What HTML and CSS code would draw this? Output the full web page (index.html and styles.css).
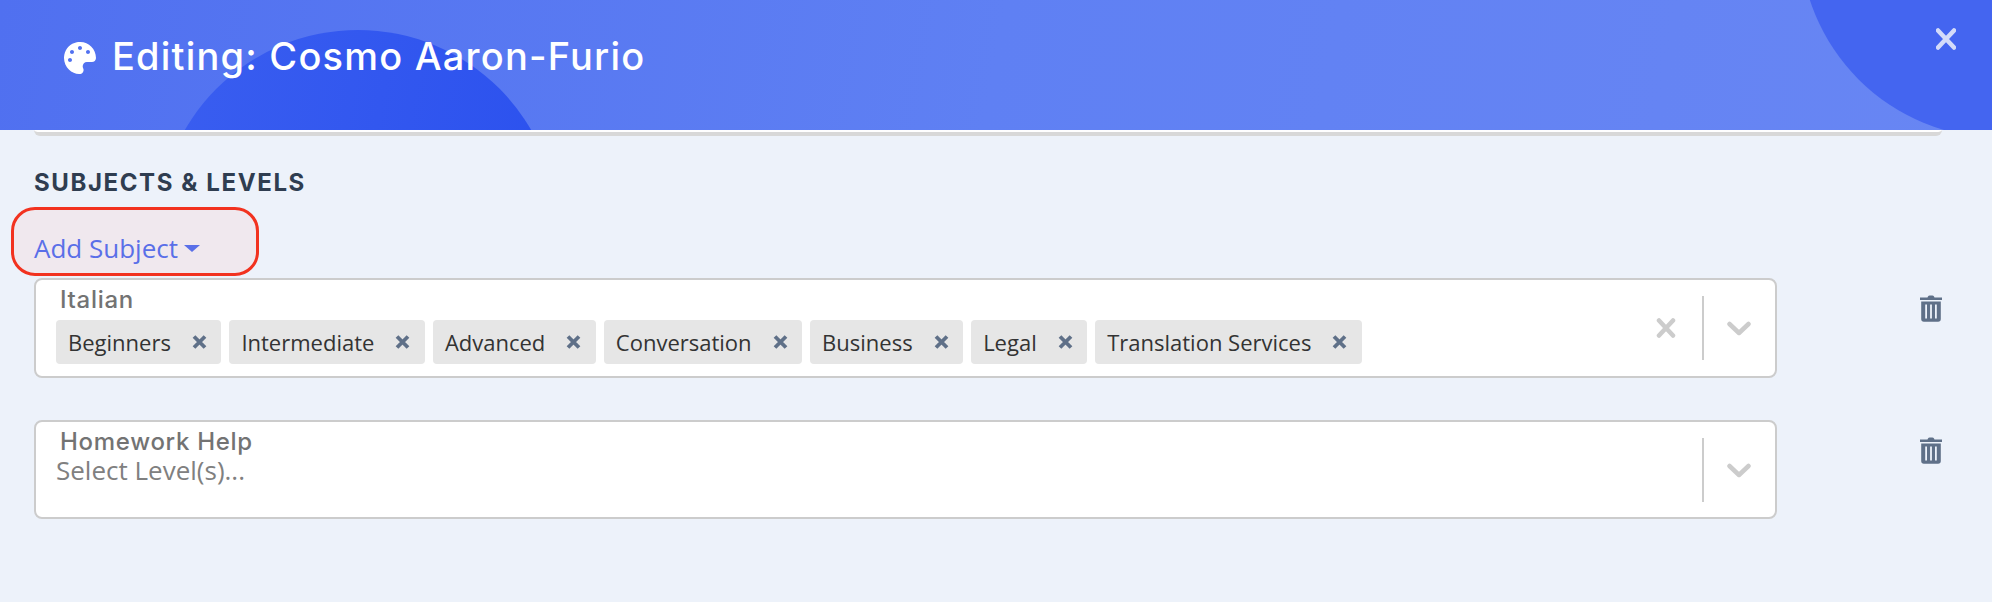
FILE: index.html
```html
<!DOCTYPE html>
<html lang="en">
<head>
<meta charset="utf-8">
<title>Editing: Cosmo Aaron-Furio</title>
<link rel="stylesheet" href="styles.css">
</head>
<body>
<div class="modal">
  <header class="modal-header">
    <span class="blob blob-left"></span>
    <span class="blob blob-right"></span>
    <svg class="palette" viewBox="0 0 512 512" aria-hidden="true"><path fill="#fff" d="M204.3 5C104.9 24.4 24.8 104.3 5.2 203.4c-37 187 131.7 326.4 258.8 306.7 41.2-6.4 61.4-54.6 42.5-91.7-23.1-45.4 9.9-98.4 60.9-98.4h79.7c35.8 0 64.8-29.6 64.9-65.3C511.5 97.1 368.1-26.9 204.3 5zM96 320c-17.7 0-32-14.3-32-32s14.3-32 32-32 32 14.3 32 32-14.3 32-32 32zm32-128c-17.7 0-32-14.3-32-32s14.3-32 32-32 32 14.3 32 32-14.3 32-32 32zm128-64c-17.7 0-32-14.3-32-32s14.3-32 32-32 32 14.3 32 32-14.3 32-32 32zm128 64c-17.7 0-32-14.3-32-32s14.3-32 32-32 32 14.3 32 32-14.3 32-32 32z"/></svg>
    <h1 class="modal-title">Editing: Cosmo Aaron-Furio</h1>
    <svg class="close" viewBox="0 0 20 22" aria-hidden="true"><path d="M2 2.5 18 19.5M18 2.5 2 19.5"/></svg>
  </header>
  <main class="modal-body">
    <div class="prev-field"></div>
    <h2 class="section-title">SUBJECTS &amp; LEVELS</h2>
    <div class="add-subject">
      <span class="highlight"></span>
      <span class="add-label">Add Subject</span>
      <span class="caret"></span>
    </div>
    <div class="subject-row">
      <div class="select">
        <div class="select-values">
          <div class="select-label">Italian</div>
          <div class="chips">
            <span class="chip">Beginners<svg class="chip-x" viewBox="0 0 15 14"><path d="M2 1.500 13 12.500M13 1.500 2 12.500"/></svg></span>
            <span class="chip">Intermediate<svg class="chip-x" viewBox="0 0 15 14"><path d="M2 1.500 13 12.500M13 1.500 2 12.500"/></svg></span>
            <span class="chip">Advanced<svg class="chip-x" viewBox="0 0 15 14"><path d="M2 1.500 13 12.500M13 1.500 2 12.500"/></svg></span>
            <span class="chip">Conversation<svg class="chip-x" viewBox="0 0 15 14"><path d="M2 1.500 13 12.500M13 1.500 2 12.500"/></svg></span>
            <span class="chip">Business<svg class="chip-x" viewBox="0 0 15 14"><path d="M2 1.500 13 12.500M13 1.500 2 12.500"/></svg></span>
            <span class="chip">Legal<svg class="chip-x" viewBox="0 0 15 14"><path d="M2 1.500 13 12.500M13 1.500 2 12.500"/></svg></span>
            <span class="chip">Translation Services<svg class="chip-x" viewBox="0 0 15 14"><path d="M2 1.500 13 12.500M13 1.500 2 12.500"/></svg></span>
          </div>
        </div>
        <div class="indicators">
          <svg class="clear" viewBox="0 0 20 22"><path d="M3 3.500 17 18.500M17 3.500 3 18.500"/></svg>
          <span class="divider"></span>
          <svg class="chevron" viewBox="0 0 24 15"><path d="M2.500 3 12 12 21.500 3"/></svg>
        </div>
      </div>
      <svg class="trash" viewBox="0 0 22 27"><path d="M0 2.500h7.500C8 .8 9 .5 11 .5s3 .3 3.500 2H22V5H0zM1.200 6.500h19.600V24c0 1.700-1 2.700-2.700 2.700H3.900c-1.700 0-2.700-1-2.700-2.700zM5.200 9.500v14h1.800v-14zM10.100 9.500v14h1.800v-14zM15 9.500v14h1.800v-14z" fill-rule="evenodd"/></svg>
    </div>
    <div class="subject-row">
      <div class="select select-empty">
        <div class="select-values">
          <div class="select-label">Homework Help</div>
          <div class="placeholder">Select Level(s)...</div>
        </div>
        <div class="indicators">
          <span class="divider"></span>
          <svg class="chevron" viewBox="0 0 24 15"><path d="M2.500 3 12 12 21.500 3"/></svg>
        </div>
      </div>
      <svg class="trash" viewBox="0 0 22 27"><path d="M0 2.500h7.500C8 .8 9 .5 11 .5s3 .3 3.500 2H22V5H0zM1.200 6.500h19.600V24c0 1.700-1 2.700-2.700 2.700H3.900c-1.700 0-2.700-1-2.700-2.700zM5.200 9.500v14h1.800v-14zM10.100 9.500v14h1.800v-14zM15 9.500v14h1.800v-14z" fill-rule="evenodd"/></svg>
    </div>
  </main>
</div>
</body>
</html>
```
FILE: styles.css
```css
* { box-sizing: border-box; }
html, body { margin: 0; height: 100%; }
body { background: #edf2fa; overflow: hidden; font-family: "Open Sans", sans-serif; }
.modal { height: 602px; overflow: hidden; }

.modal-header {
  position: relative;
  height: 130px;
  overflow: hidden;
  display: flex;
  align-items: flex-start;
  padding: 42px 0 0 64px;
  background: linear-gradient(100deg, #5070f0 0%, #5f80f3 50%, #6886f3 100%);
}
.blob { position: absolute; border-radius: 50%; width: 400px; height: 400px; }
.blob-left { left: 158px; top: 30px; background: linear-gradient(100deg, #3a5ef0, #2a50ee); }
.blob-right { left: 1800px; top: -262px; background: #4465f0; }
.palette { position: relative; width: 32px; height: 32px; flex: none; }
.modal-title {
  position: relative;
  margin: -14px 0 0 16px;
  font: 500 38px/56px "Inter", sans-serif;
  letter-spacing: 1.2px;
  color: #fff;
}
.close {
  position: absolute;
  left: 1936px;
  top: 28px;
  width: 20px;
  height: 22px;
  fill: none;
  stroke: #d3dbf9;
  stroke-width: 4.500;
  stroke-linecap: round;
}

.modal-body { padding-left: 34px; }
.prev-field {
  width: 1908px;
  height: 6px;
  background: #fff;
  border-bottom: 4px solid #d8d8d8;
  border-radius: 0 0 8px 8px;
}
.section-title {
  margin: 32px 0 0;
  font: 700 24px/30px "Inter", sans-serif;
  letter-spacing: 1.6px;
  color: #2f3d50;
}
.add-subject {
  position: relative;
  display: flex;
  align-items: center;
  height: 80px;
  padding-top: 20px;
  color: #5a6fe8;
}
.highlight {
  position: absolute;
  left: -23px;
  top: 9px;
  width: 248px;
  height: 69px;
  background: #f0e8ee;
  border: 3px solid #f2321f;
  border-radius: 24px;
}
.add-label { position: relative; font-size: 26px; line-height: 34px; }
.caret {
  position: relative;
  margin-left: 6px;
  border-top: 7px solid #5a6fe8;
  border-left: 8px solid transparent;
  border-right: 8px solid transparent;
}

.subject-row { display: flex; align-items: flex-start; margin-bottom: 42px; }
.select {
  display: flex;
  width: 1743px;
  height: 100px;
  background: #fff;
  border: 2px solid #ccc;
  border-radius: 8px;
}
.select-empty { height: 99px; }
.select-values { flex: 1; padding: 7px 0 0 20px; }
.select-label {
  padding-left: 4px;
  font: 500 24px/26px "Inter", sans-serif;
  letter-spacing: 0.7px;
  color: #737373;
}
.chips { display: flex; gap: 8px; margin-top: 7px; }
.chip {
  display: flex;
  align-items: center;
  height: 44px;
  padding: 0 14.500px 1px 12px;
  background: #e6e6e6;
  border-radius: 4px;
  font-size: 22px;
  color: #333;
}
.chip-x {
  width: 15px;
  height: 14px;
  margin-left: 21px;
  fill: none;
  stroke: #5f7088;
  stroke-width: 3.800;
}
.placeholder { font-size: 26px; line-height: 30px; color: #808080; }
.indicators { position: relative; display: flex; align-items: center; width: 122px; }
.clear {
  position: absolute;
  left: 3px;
  top: 37px;
  width: 20px;
  height: 22px;
  fill: none;
  stroke: #ccc;
  stroke-width: 4.500;
  stroke-linecap: round;
}
.divider { width: 2px; height: 64px; margin-left: 49px; background: #ccc; }
.chevron {
  width: 24px;
  height: 15px;
  margin-left: 23px;
  margin-top: 1px;
  fill: none;
  stroke: #ccc;
  stroke-width: 4.500;
  stroke-linecap: round;
  stroke-linejoin: round;
}
.trash { width: 22px; height: 27px; margin: 17px 0 0 143px; fill: #5f7088; flex: none; }
```
